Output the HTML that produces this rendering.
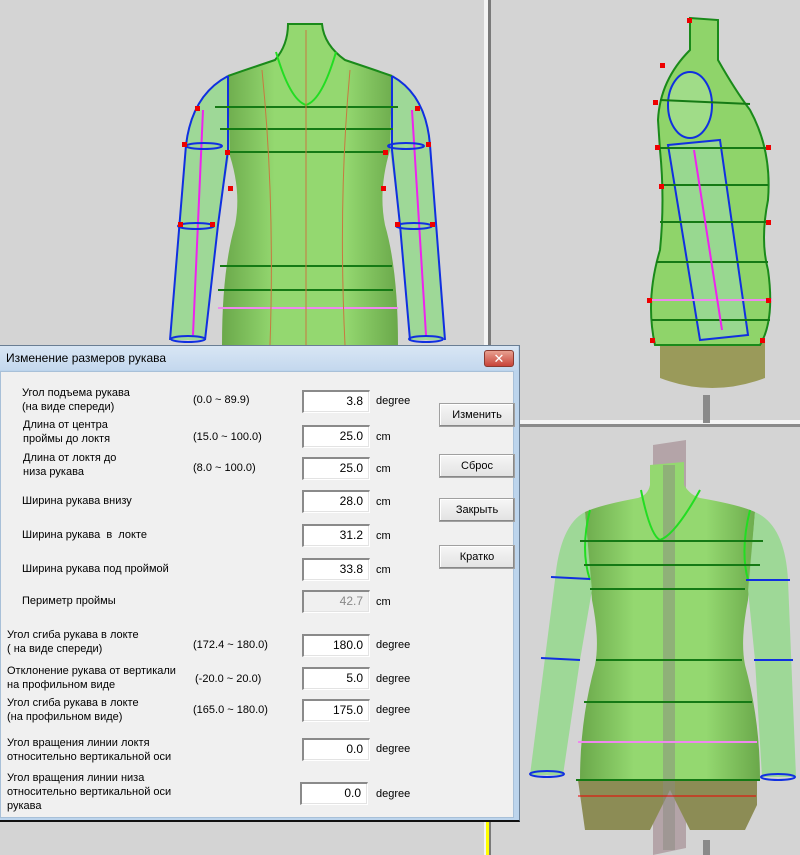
<!DOCTYPE html>
<html><head><meta charset="utf-8"><style>
*{margin:0;padding:0;box-sizing:border-box}
body{width:800px;height:855px;background:#d4d4d4;position:relative;overflow:hidden;font-family:"Liberation Sans","DejaVu Sans",sans-serif;font-size:11px;color:#000}
.a{position:absolute;white-space:nowrap;line-height:14px}
.in{position:absolute;width:68px;height:23px;background:#fff;border:1px solid #fff;border-top:2px solid #8a8a8a;border-left:2px solid #8a8a8a;box-shadow:inset -1px -1px 0 #e3e3e3;text-align:right;padding-right:6px;line-height:19px;font-size:12px}
.b{position:absolute;left:439px;width:76px;height:24px;background:linear-gradient(#f6f6f6,#e2e2e2);border:1px solid #a0a0a0;box-shadow:inset -1px -1px 0 #888,inset 1px 1px 0 #fff;text-align:center;line-height:22px;font-size:11px}
</style></head><body>
<svg width="800" height="855" style="position:absolute;left:0;top:0">
<defs>
<linearGradient id="tg" x1="0" x2="1"><stop offset="0" stop-color="#6aa84a"/><stop offset=".3" stop-color="#94d870"/><stop offset=".7" stop-color="#94d870"/><stop offset="1" stop-color="#6aa84a"/></linearGradient>
</defs>
<rect x="484" y="0" width="4" height="855" fill="#f4f4f4"/>
<rect x="488" y="0" width="3" height="855" fill="#7a7a7a"/>
<rect x="486" y="820" width="3" height="35" fill="#ffff00"/>
<rect x="491" y="420" width="309" height="4" fill="#f4f4f4"/>
<rect x="491" y="424" width="309" height="3" fill="#8a8a8a"/>
<!-- front figure -->
<g>
<path d="M288 24 L322 24 Q324 45 345 60 Q375 70 392 76 L390 150 Q378 190 385 225 Q398 270 398 345 L222 345 Q222 270 235 225 Q242 190 228 150 L228 76 Q245 70 275 60 Q288 45 288 24Z" fill="url(#tg)"/>
<path d="M228 76 Q192 95 186 145 L170 340 L205 340 L218 225 L230 150Z" fill="#98d890" opacity=".9"/>
<path d="M392 76 Q426 95 430 145 L445 340 L410 340 L400 225 L390 150Z" fill="#98d890" opacity=".9"/>
<path d="M392 76 Q375 70 345 60 Q324 45 322 24 L288 24 Q288 45 275 60 Q245 70 228 76" stroke="#1a8a1a" stroke-width="2" fill="none"/>
<path d="M228 76 Q192 95 186 145 L170 340 M205 340 L218 225 L228 150 L228 76 M392 76 Q426 95 430 145 L445 340 M410 340 L400 225 L392 150 L392 76" stroke="#1030e0" stroke-width="2" fill="none"/>
<path d="M276 52 Q290 100 306 105 Q322 100 336 52" stroke="#22dd22" stroke-width="2" fill="none"/>
<g stroke="#157a15" stroke-width="2"><line x1="215" y1="107" x2="398" y2="107"/><line x1="220" y1="129" x2="393" y2="129"/><line x1="228" y1="152" x2="388" y2="152"/><line x1="220" y1="266" x2="392" y2="266"/><line x1="218" y1="290" x2="393" y2="290"/></g>
<line x1="218" y1="308" x2="398" y2="308" stroke="#ee88ee" stroke-width="2"/>
<path d="M203 110 L193 335 M412 110 L426 335" stroke="#ee22ee" stroke-width="2"/>
<g fill="none" stroke="#1030e0" stroke-width="2"><ellipse cx="204" cy="146" rx="18" ry="3"/><ellipse cx="406" cy="146" rx="18" ry="3"/><ellipse cx="196" cy="226" rx="18" ry="3"/><ellipse cx="414" cy="226" rx="18" ry="3"/><ellipse cx="188" cy="339" rx="17" ry="3"/><ellipse cx="426" cy="339" rx="17" ry="3"/></g>
<path d="M306 30 L306 345 M262 70 Q275 200 270 345 M350 70 Q338 200 345 345" stroke="#c87840" stroke-width="1" fill="none"/>
<g fill="#ee0000"><rect x="195" y="106" width="5" height="5"/><rect x="415" y="106" width="5" height="5"/><rect x="182" y="142" width="5" height="5"/><rect x="426" y="142" width="5" height="5"/><rect x="225" y="150" width="5" height="5"/><rect x="383" y="150" width="5" height="5"/><rect x="228" y="186" width="5" height="5"/><rect x="381" y="186" width="5" height="5"/><rect x="178" y="222" width="5" height="5"/><rect x="430" y="222" width="5" height="5"/><rect x="210" y="222" width="5" height="5"/><rect x="395" y="222" width="5" height="5"/></g>
</g>
<!-- side figure -->
<g>
<path d="M660 340 L765 340 L765 378 Q712 398 660 378Z" fill="#9a9a5a"/>
<path d="M690 18 L718 20 L718 60 Q735 90 750 110 Q772 150 768 200 Q760 240 768 270 Q775 320 760 345 L655 345 Q645 300 660 250 Q665 200 660 150 L658 120 Q660 80 690 50Z" fill="#8fd46a" stroke="#1a8a1a" stroke-width="2"/>
<rect x="703" y="395" width="7" height="28" fill="#8a8a8a"/>
<ellipse cx="690" cy="105" rx="22" ry="33" fill="#a0dc88" stroke="#1030e0" stroke-width="2"/>
<path d="M668 145 L720 140 L748 335 L700 340Z" fill="#98d890" stroke="#1030e0" stroke-width="2"/>
<g stroke="#157a15" stroke-width="2"><line x1="660" y1="100" x2="750" y2="104"/><line x1="660" y1="148" x2="768" y2="148"/><line x1="660" y1="185" x2="768" y2="185"/><line x1="660" y1="222" x2="768" y2="222"/><line x1="656" y1="262" x2="768" y2="262"/><line x1="652" y1="320" x2="770" y2="320"/></g>
<line x1="650" y1="300" x2="772" y2="300" stroke="#ee88ee" stroke-width="2"/>
<path d="M694 150 L722 330" stroke="#ee22ee" stroke-width="2"/>
<g fill="#ee0000"><rect x="687" y="18" width="5" height="5"/><rect x="660" y="63" width="5" height="5"/><rect x="653" y="100" width="5" height="5"/><rect x="655" y="145" width="5" height="5"/><rect x="766" y="145" width="5" height="5"/><rect x="659" y="184" width="5" height="5"/><rect x="766" y="220" width="5" height="5"/><rect x="647" y="298" width="5" height="5"/><rect x="766" y="298" width="5" height="5"/><rect x="650" y="338" width="5" height="5"/><rect x="760" y="338" width="5" height="5"/></g>
</g>
<!-- bottom-right figure -->
<g>
<path d="M653 445 L686 440 L686 848 L653 855Z" fill="#b4a4a8"/>
<path d="M578 780 L757 780 L757 805 L745 830 L690 830 L670 790 L650 830 L585 830Z" fill="#8c8c55"/>
<path d="M650 465 L684 462 L684 485 Q690 495 700 498 Q740 505 755 512 L748 600 Q740 640 745 665 Q760 720 760 780 L580 780 Q580 720 595 665 Q600 640 592 600 L585 512 Q600 505 638 498 Q648 495 650 485Z" fill="url(#tg)"/>
<path d="M585 512 Q560 525 555 580 L530 775 L563 775 L580 660 L592 590Z" fill="#98d890" opacity=".9"/>
<path d="M755 512 Q785 525 788 580 L796 777 L762 777 L755 660 L748 590Z" fill="#98d890" opacity=".9"/>
<rect x="663" y="465" width="12" height="385" fill="#8a8a80" opacity=".5"/>
<path d="M641 490 Q650 535 660 540 Q675 535 700 490" stroke="#22dd22" stroke-width="2" fill="none"/>
<path d="M590 510 Q580 550 590 580 M750 510 Q740 550 748 580" stroke="#22dd22" stroke-width="2" fill="none"/>
<g stroke="#157a15" stroke-width="2"><line x1="580" y1="541" x2="763" y2="541"/><line x1="584" y1="565" x2="760" y2="565"/><line x1="590" y1="589" x2="745" y2="589"/><line x1="596" y1="660" x2="742" y2="660"/><line x1="584" y1="702" x2="752" y2="702"/><line x1="576" y1="780" x2="760" y2="780"/></g>
<line x1="578" y1="742" x2="757" y2="742" stroke="#ee88ee" stroke-width="2"/>
<line x1="578" y1="796" x2="756" y2="796" stroke="#ee0000" stroke-width="1"/>
<g stroke="#1030e0" stroke-width="2"><line x1="551" y1="577" x2="590" y2="579"/><line x1="746" y1="580" x2="790" y2="580"/><line x1="541" y1="658" x2="580" y2="660"/><line x1="754" y1="660" x2="793" y2="660"/></g>
<g fill="none" stroke="#1030e0" stroke-width="2"><ellipse cx="547" cy="774" rx="17" ry="3"/><ellipse cx="778" cy="777" rx="17" ry="3"/></g>
<rect x="703" y="840" width="7" height="15" fill="#8a8a8a"/>
</g>
</svg>
<!-- dialog -->
<div style="position:absolute;left:0;top:345px;width:520px;height:477px;background:#bcd4ec;border:1px solid #6a7e94;border-left:none;border-bottom:2px solid #101010"></div>
<div style="position:absolute;left:0;top:346px;width:518px;height:24px;background:linear-gradient(#d8e6f4,#c4d8ee)"></div>
<div class="a" style="left:6px;top:351px;font-size:12px">Изменение размеров рукава</div>
<div style="position:absolute;left:484px;top:350px;width:30px;height:17px;border-radius:3px;background:linear-gradient(#e8a090,#c8443a);border:1px solid #8a3a30;color:#fff;font-weight:bold;text-align:center;line-height:15px;font-size:13px">✕</div>
<div style="position:absolute;left:0;top:371px;width:514px;height:447px;background:#f0f0f0;border:1px solid #a8c0d8"></div>

<div class="a" style="left:22px;top:386px">Угол подъема рукава<br>(на виде спереди)</div>
<div class="a" style="left:193px;top:393px">(0.0 ~ 89.9)</div>
<div class="in" style="left:302px;top:390px">3.8</div><div class="a" style="left:376px;top:394px">degree</div>

<div class="a" style="left:23px;top:418px">Длина от центра<br>проймы до локтя</div>
<div class="a" style="left:193px;top:430px">(15.0 ~ 100.0)</div>
<div class="in" style="left:302px;top:425px">25.0</div><div class="a" style="left:376px;top:430px">cm</div>

<div class="a" style="left:23px;top:451px">Длина от локтя до<br>низа рукава</div>
<div class="a" style="left:193px;top:461px">(8.0 ~ 100.0)</div>
<div class="in" style="left:302px;top:457px">25.0</div><div class="a" style="left:376px;top:462px">cm</div>

<div class="a" style="left:22px;top:494px">Ширина рукава внизу</div>
<div class="in" style="left:302px;top:490px">28.0</div><div class="a" style="left:376px;top:495px">cm</div>

<div class="a" style="left:22px;top:528px">Ширина рукава &nbsp;в &nbsp;локте</div>
<div class="in" style="left:302px;top:524px">31.2</div><div class="a" style="left:376px;top:529px">cm</div>

<div class="a" style="left:22px;top:562px">Ширина рукава под проймой</div>
<div class="in" style="left:302px;top:558px">33.8</div><div class="a" style="left:376px;top:563px">cm</div>

<div class="a" style="left:22px;top:594px">Периметр проймы</div>
<div class="in" style="left:302px;top:590px;background:#f0f0f0;color:#888">42.7</div><div class="a" style="left:376px;top:595px">cm</div>

<div class="a" style="left:7px;top:628px">Угол сгиба рукава в локте<br>( на виде спереди)</div>
<div class="a" style="left:193px;top:638px">(172.4 ~ 180.0)</div>
<div class="in" style="left:302px;top:634px">180.0</div><div class="a" style="left:376px;top:638px">degree</div>

<div class="a" style="left:7px;top:664px">Отклонение рукава от вертикали<br>на профильном виде</div>
<div class="a" style="left:195px;top:672px">(-20.0 ~ 20.0)</div>
<div class="in" style="left:302px;top:667px">5.0</div><div class="a" style="left:376px;top:672px">degree</div>

<div class="a" style="left:7px;top:696px">Угол сгиба рукава в локте<br>(на профильном виде)</div>
<div class="a" style="left:193px;top:703px">(165.0 ~ 180.0)</div>
<div class="in" style="left:302px;top:699px">175.0</div><div class="a" style="left:376px;top:703px">degree</div>

<div class="a" style="left:7px;top:736px">Угол вращения линии локтя<br>относительно вертикальной оси</div>
<div class="in" style="left:302px;top:738px">0.0</div><div class="a" style="left:376px;top:742px">degree</div>

<div class="a" style="left:7px;top:771px">Угол вращения линии низа<br>относительно вертикальной оси<br>рукава</div>
<div class="in" style="left:300px;top:782px">0.0</div><div class="a" style="left:376px;top:787px">degree</div>

<div class="b" style="top:403px">Изменить</div>
<div class="b" style="top:454px">Сброс</div>
<div class="b" style="top:498px">Закрыть</div>
<div class="b" style="top:545px">Кратко</div>
</body></html>
